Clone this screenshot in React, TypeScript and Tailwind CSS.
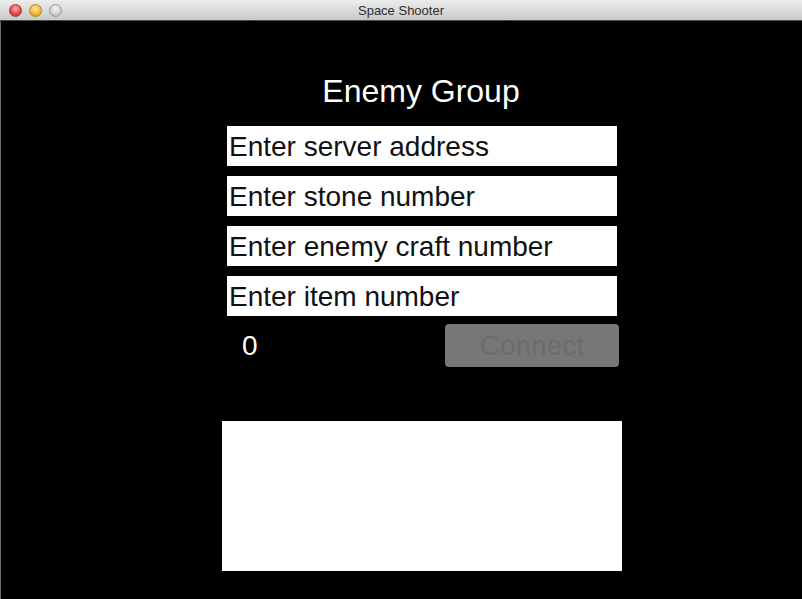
import React from 'react'

const fields = [
  'Enter server address',
  'Enter stone number',
  'Enter enemy craft number',
  'Enter item number',
]

const TitleBar = () => {
  return (
    <div className="relative h-[21px] flex items-center justify-center bg-gradient-to-b from-[#ededed] to-[#c9c9c9] border-b border-[#4a4a4a]">
      <div className="absolute left-[9px] top-[4px] flex gap-[7px]">
        <span className="w-[13px] h-[13px] rounded-full border border-[#b33a3a] bg-[radial-gradient(circle_at_50%_35%,#ffb3b3,#e0443f_60%,#b82b27)]"></span>
        <span className="w-[13px] h-[13px] rounded-full border border-[#b58a1a] bg-[radial-gradient(circle_at_50%_35%,#ffe9a6,#f2b32b_60%,#c98b12)]"></span>
        <span className="w-[13px] h-[13px] rounded-full border border-[#9a9a9a] bg-[radial-gradient(circle_at_50%_35%,#f5f5f5,#cfcfcf_60%,#a9a9a9)]"></span>
      </div>
      <span className="text-[13px] text-[#2e2e2e] font-['Liberation_Sans',sans-serif] leading-none">Space Shooter</span>
    </div>
  )
}

export default function App() {
  return (
    <div className="w-[802px] h-[599px] flex flex-col bg-black overflow-hidden font-['Liberation_Sans',Arial,sans-serif]">
      <TitleBar />
      <div className="flex-1 border-l border-[#6b6b6b]">
        <div className="w-[400px] ml-[221px] flex flex-col">
          <div className="mt-[52px] h-[36px] leading-[36px] text-[32px] text-white text-center pr-[2px]">Enemy Group</div>
          <div className="mt-[17px] mx-[5px] flex flex-col gap-[10px]">
            {fields.map((f) => (
              <div key={f} className="h-[40px] bg-white pl-[2px] text-[28px] leading-[42px] text-[#111111] overflow-hidden whitespace-nowrap">
                {f}
              </div>
            ))}
          </div>
          <div className="mt-[8px] h-[43px] flex items-center justify-between pl-[20px] pr-[3px]">
            <span className="text-[28px] leading-[32px] text-white">0</span>
            <button className="w-[174px] h-[43px] rounded-[4px] bg-[#777777] text-[28px] leading-[43px] text-[#6c6c6c]">Connect</button>
          </div>
          <div className="mt-[54px] h-[150px] bg-white"></div>
        </div>
      </div>
    </div>
  )
}
